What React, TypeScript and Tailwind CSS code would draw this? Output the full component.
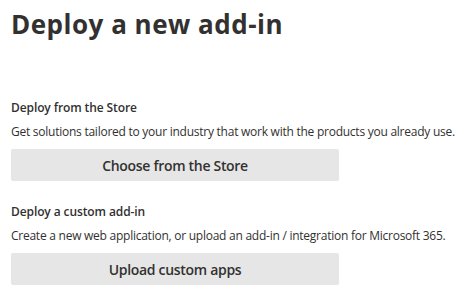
const font = { fontFamily: '"Open Sans", "Liberation Sans", sans-serif' };

function Section({
  title,
  description,
  action,
}: {
  title: string;
  description: string;
  action: string;
}) {
  return (
    <div className="flex flex-col">
      <h2 className="text-[12px] font-semibold leading-[16px] tracking-[-0.1px] text-[#323130]">{title}</h2>
      <p className="mt-[8px] whitespace-nowrap text-[12px] leading-[16px] tracking-[-0.25px] text-[#323130]">
        {description}
      </p>
      <button className="mt-[9px] h-[32px] w-[328px] rounded-[2px] bg-[#e6e6e6] text-[14px] font-semibold tracking-[-0.3px] text-[#323130]">
        {action}
      </button>
    </div>
  );
}

export default function App() {
  return (
    <div className="h-[300px] w-[465px] bg-white px-[11px] pt-[6px]" style={font}>
      <h1 className="text-[26px] font-bold leading-[36px] tracking-[0.5px] text-[#323130]">Deploy a new add-in</h1>
      <div className="mt-[58px] flex flex-col gap-[23px]">
        <Section
          title="Deploy from the Store"
          description="Get solutions tailored to your industry that work with the products you already use."
          action="Choose from the Store"
        />
        <Section
          title="Deploy a custom add-in"
          description="Create a new web application, or upload an add-in / integration for Microsoft 365."
          action="Upload custom apps"
        />
      </div>
    </div>
  );
}
